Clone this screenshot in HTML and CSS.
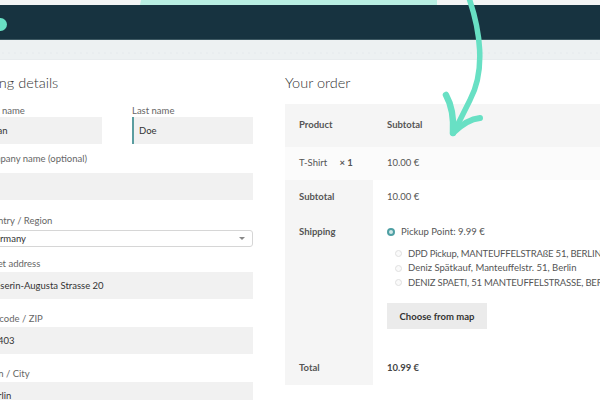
FILE: index.html
```html
<!DOCTYPE html>
<html lang="en">
<head>
    <meta charset="UTF-8">
    <meta name="viewport" content="width=device-width, initial-scale=1.0">
    <title>Checkout</title>
    <link rel="stylesheet" href="styles.css">
</head>
<body>
    <!-- Site header -->
    <div class="top-strip"><div class="mint-shape"></div></div>
    <div class="navbar"><span class="nav-dot"></span></div>
    <div class="sub-strip"></div>

    <div class="checkout">
        <!-- Billing form -->
        <div class="billing">
            <h2>Billing details</h2>

            <div class="row-two">
                <div class="field">
                    <label>First name</label>
                    <div class="input">Ryan</div>
                </div>
                <div class="field">
                    <label>Last name</label>
                    <div class="input focused">Doe</div>
                </div>
            </div>

            <div class="field company">
                <label>Company name (optional)</label>
                <div class="input"></div>
            </div>

            <div class="field country">
                <label>Country / Region</label>
                <div class="select">Germany<span class="caret"></span></div>
            </div>

            <div class="field">
                <label>Street address</label>
                <div class="input">Kaiserin-Augusta Strasse 20</div>
            </div>

            <div class="field">
                <label>Postcode / ZIP</label>
                <div class="input">10403</div>
            </div>

            <div class="field">
                <label>Town / City</label>
                <div class="input">Berlin</div>
            </div>
        </div>

        <!-- Order summary -->
        <div class="order">
            <h2>Your order</h2>
            <table class="order-table">
                <colgroup>
                    <col class="col-label">
                    <col>
                </colgroup>
                <tr class="head-row">
                    <th>Product</th>
                    <th>Subtotal</th>
                </tr>
                <tr class="item-row">
                    <td>T-Shirt <span class="qty">&times;&nbsp;1</span></td>
                    <td>10.00 &euro;</td>
                </tr>
                <tr class="subtotal-row">
                    <th>Subtotal</th>
                    <td>10.00 &euro;</td>
                </tr>
                <tr class="shipping-row">
                    <th>Shipping</th>
                    <td>
                        <div class="option main"><span class="radio checked"></span>Pickup Point: 9.99 &euro;</div>
                        <div class="points">
                            <div class="option caps"><span class="radio"></span>DPD Pickup, MANTEUFFELSTRAßE 51, BERLIN</div>
                            <div class="option"><span class="radio"></span>Deniz Spätkauf, Manteuffelstr. 51, Berlin</div>
                            <div class="option caps"><span class="radio"></span>DENIZ SPAETI, 51 MANTEUFFELSTRASSE, BERLIN</div>
                        </div>
                        <button class="map-btn">Choose from map</button>
                    </td>
                </tr>
                <tr class="total-row">
                    <th>Total</th>
                    <td><strong>10.99 &euro;</strong></td>
                </tr>
            </table>
        </div>
    </div>

    <!-- Hand drawn arrow over the page -->
    <svg class="arrow" width="600" height="400" viewBox="0 0 600 400">
        <path d="M469 -2 C480 30 486 70 470 100 C464 112 459 122 455 130" fill="none" stroke="#68e0c4" stroke-width="5.5" stroke-linecap="round"/>
        <path d="M446 95 C451 104 454 116 453 133" fill="none" stroke="#68e0c4" stroke-width="6.5" stroke-linecap="round"/>
        <path d="M480 118 C470 119 461 125 453 133" fill="none" stroke="#68e0c4" stroke-width="6" stroke-linecap="round"/>
    </svg>
</body>
</html>
```

FILE: styles.css
```css
body {
    margin: 0;
    width: 600px;
    height: 400px;
    overflow: hidden;
    position: relative;
    background-color: #fff;
    font-family: Lato, "Noto Sans", sans-serif;
    font-size: 9.5px;
    color: #555;
}

.top-strip {
    height: 5px;
    background-color: #f2f4f4;
}

.mint-shape {
    margin-left: 140px;
    width: 297px;
    height: 5px;
    background-color: #b9efe3;
    clip-path: polygon(1px 0, 100% 0, 100% 100%, 0 100%);
}

.navbar {
    height: 34px;
    background-color: #173340;
    border-bottom: 1px solid #3d5862;
    display: flex;
    align-items: center;
}

.nav-dot {
    width: 13px;
    height: 13px;
    margin-left: -6px;
    margin-top: 4px;
    border-radius: 50%;
    background-color: #68e0c4;
}

.sub-strip {
    height: 19px;
    background-color: #edf1f2;
    border-bottom: 1px solid #e8ecee;
    background-image: radial-gradient(circle, #e4e9eb 0.6px, transparent 0.8px);
    background-size: 6px 2px;
    background-position: 0 12px;
    background-repeat: repeat-x;
}

.checkout {
    display: grid;
    grid-template-columns: 272px 340px;
    column-gap: 32px;
    margin-left: -19px;
}

h2 {
    margin: 12px 0 0;
    font-size: 14.5px;
    font-weight: 300;
    color: #333;
    line-height: 22px;
}

.billing h2 {
    margin-left: -4px;
}

/* Billing form */
.row-two {
    display: grid;
    grid-template-columns: 121px 121px;
    column-gap: 30px;
    margin-top: 10px;
    margin-bottom: 8px;
}

.field {
    margin-bottom: 13px;
}

.field label {
    display: block;
    line-height: 14px;
    margin-bottom: 1px;
    color: #666;
}

.row-two .field {
    margin-bottom: 0;
}

.row-two .field label {
    margin-bottom: -1px;
}

.company {
    margin-bottom: 14px;
}

.company label {
    margin-bottom: 7px;
}

.input {
    height: 27px;
    line-height: 27px;
    padding: 0 6px;
    background-color: #f1f1f1;
    color: #333;
}

.input.focused {
    border-left: 2px solid #5a9da0;
    padding-left: 5px;
}

.country label {
    margin-bottom: 2px;
}

.country {
    margin-bottom: 10px;
}

.select {
    position: relative;
    height: 15px;
    line-height: 15px;
    padding: 0 6px;
    border: 1px solid #d6d6d6;
    border-radius: 3px;
    color: #333;
}

.caret {
    position: absolute;
    right: 7px;
    top: 6px;
    border-left: 3px solid transparent;
    border-right: 3px solid transparent;
    border-top: 3px solid #888;
}

/* Order table */
.order-table {
    margin-top: 10px;
    width: 340px;
    border-collapse: collapse;
    table-layout: fixed;
}

.col-label {
    width: 88px;
}

.order-table th,
.order-table td {
    text-align: left;
    vertical-align: top;
    padding: 10px 14px;
    line-height: 14px;
    white-space: nowrap;
}

.order-table th {
    font-weight: 700;
    background-color: #f5f5f5;
}

.head-row th {
    padding-top: 14px;
    padding-bottom: 15px;
}

.item-row td {
    background-color: #fbfbfb;
    padding-top: 9px;
}

.qty {
    font-weight: 700;
    margin-left: 10px;
}

.shipping-row th,
.shipping-row td {
    padding-top: 11px;
    padding-bottom: 22px;
}

.option {
    display: flex;
    align-items: center;
    line-height: 14.5px;
}

.option.caps {
    letter-spacing: -0.2px;
}

.option.main {
    margin-bottom: 7px;
}

.points {
    padding-left: 8px;
}

.radio {
    flex: none;
    width: 7px;
    height: 7px;
    margin-right: 6px;
    border: 1px solid #e0e0e0;
    border-radius: 50%;
    background-color: #fafafa;
    box-sizing: border-box;
}

.radio.checked {
    border: 2.5px solid #4e9fa3;
    background-color: #cfe8e8;
    width: 8px;
    height: 8px;
}

.map-btn {
    display: block;
    margin-top: 13px;
    width: 100px;
    height: 26px;
    border: none;
    background-color: #ebebeb;
    font-family: Lato, "Noto Sans", sans-serif;
    font-size: 9.5px;
    font-weight: 700;
    color: #333;
}

.total-row strong {
    color: #444;
}

.arrow {
    position: absolute;
    top: 0;
    left: 0;
    pointer-events: none;
}
```
